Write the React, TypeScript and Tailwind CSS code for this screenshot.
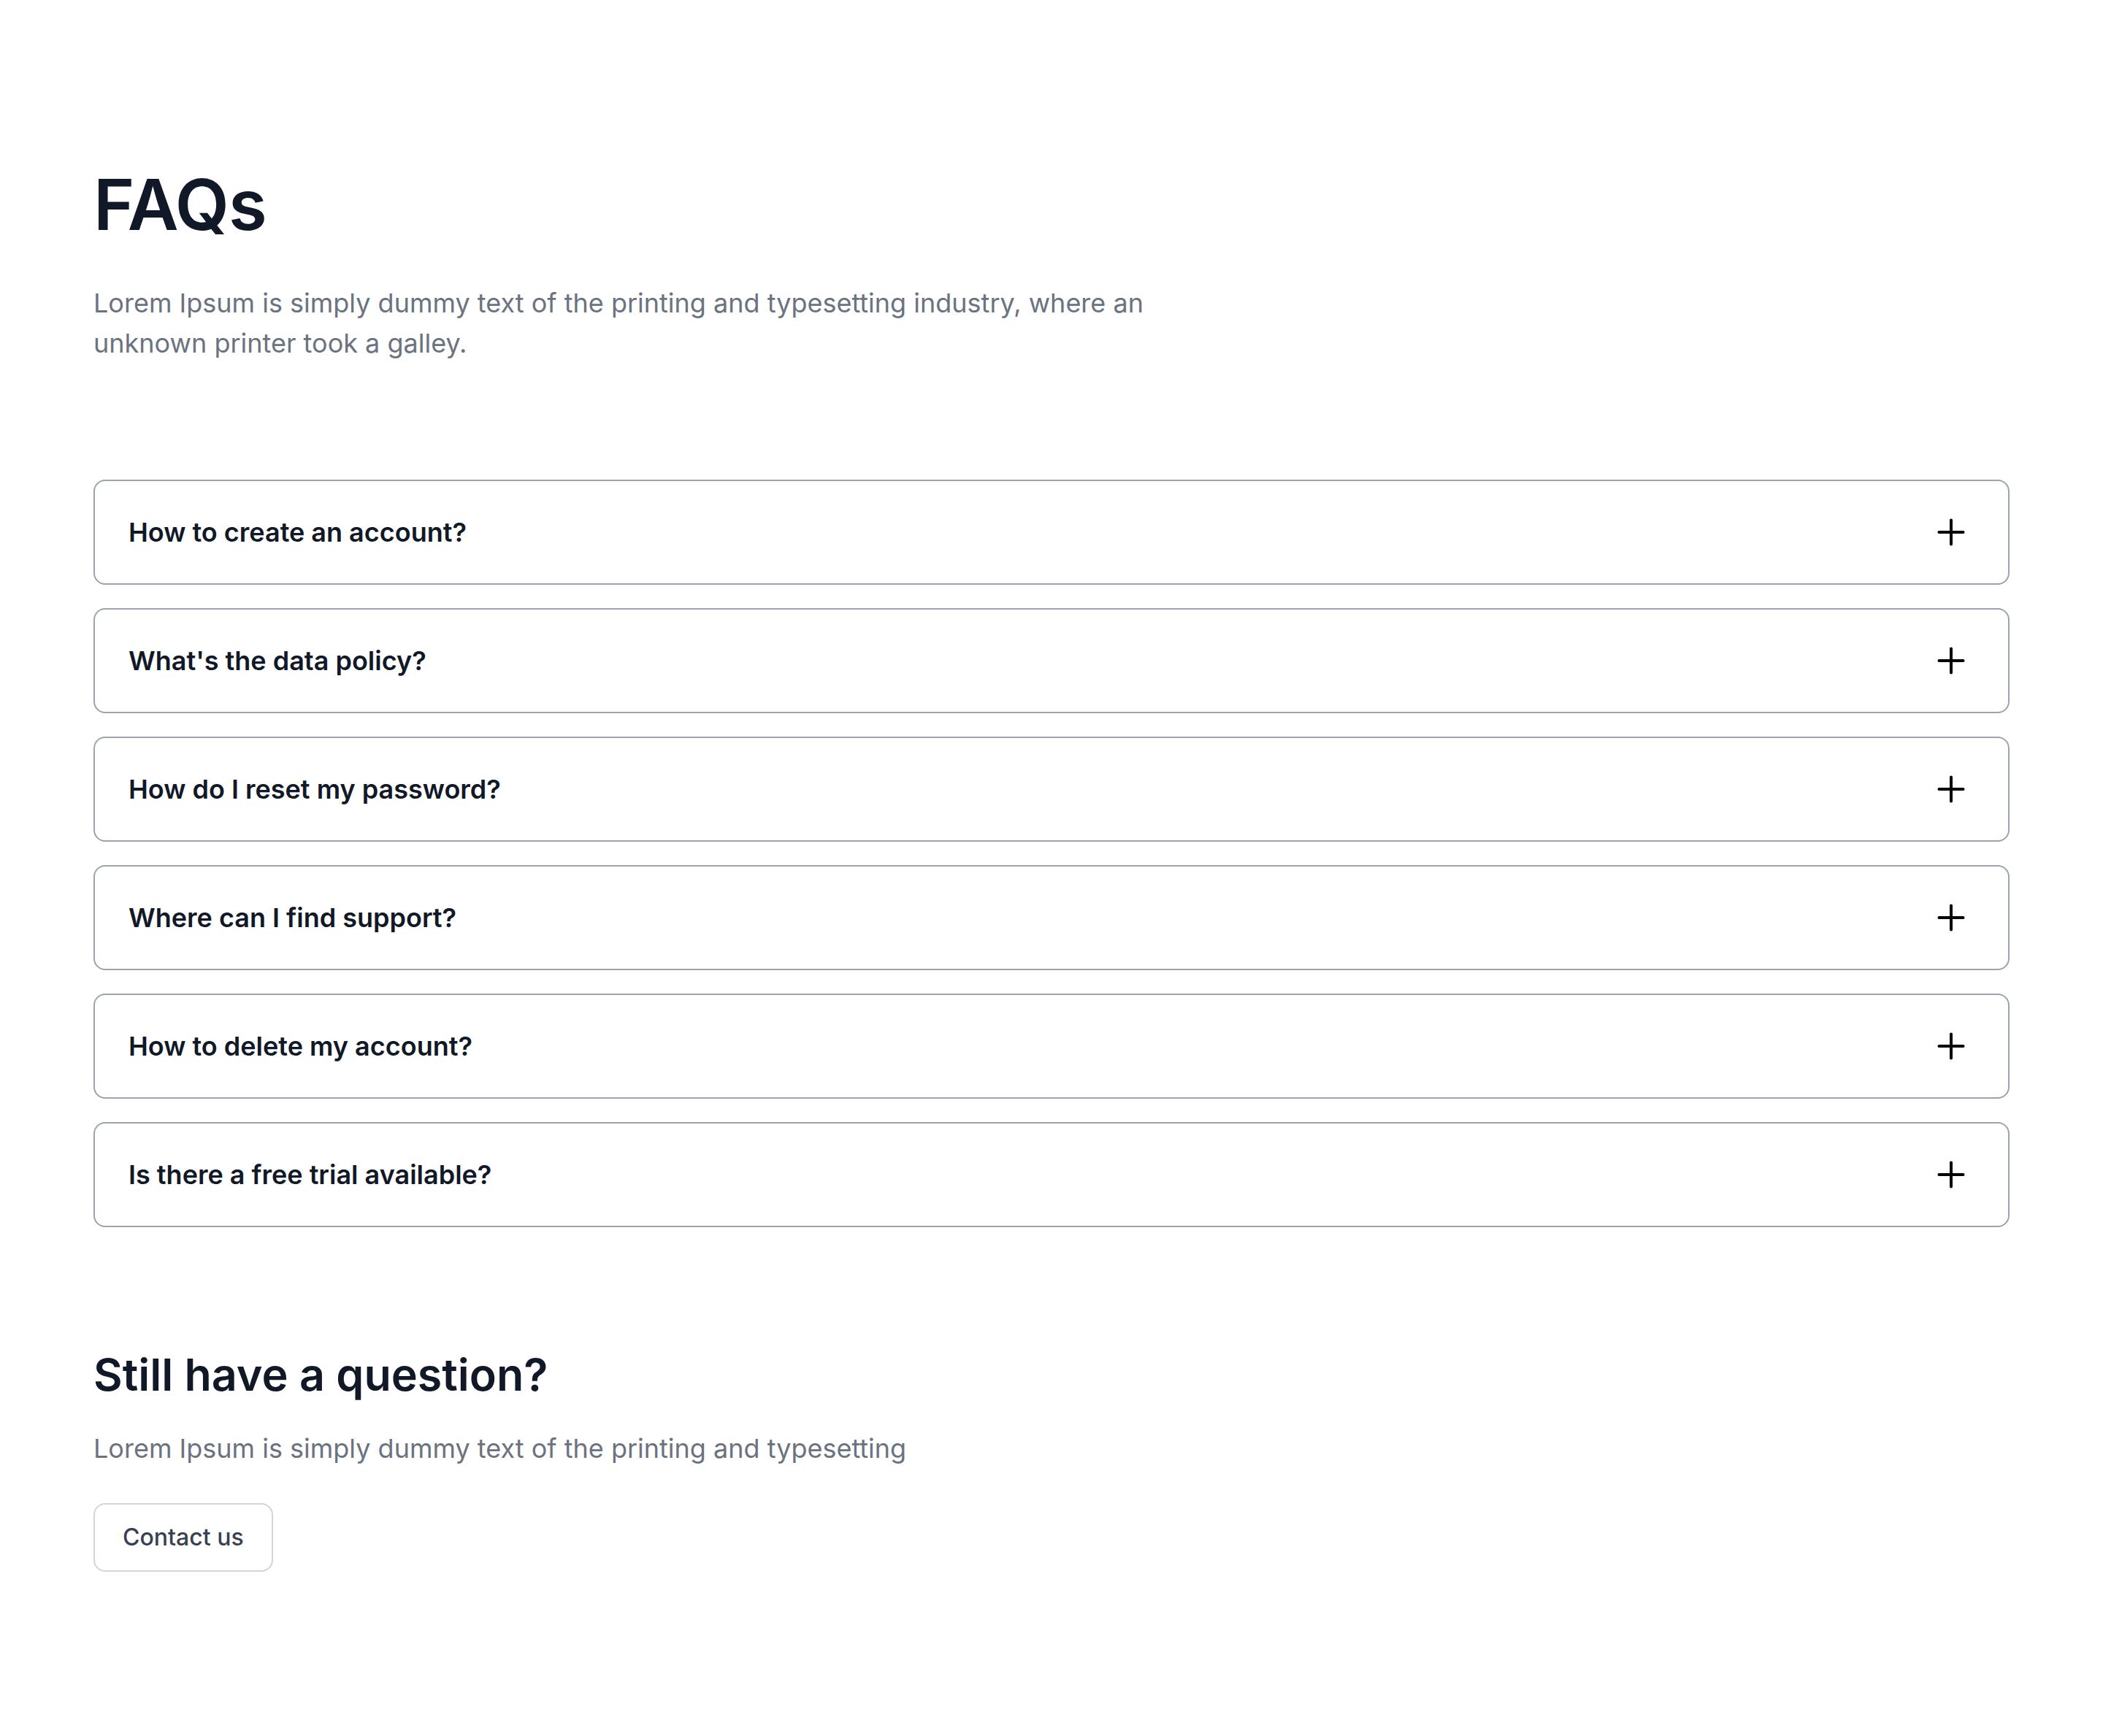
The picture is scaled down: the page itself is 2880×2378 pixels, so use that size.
import React from "react";

const questions = [
  "How to create an account?",
  "What's the data policy?",
  "How do I reset my password?",
  "Where can I find support?",
  "How to delete my account?",
  "Is there a free trial available?",
];

function PlusIcon() {
  return (
    <svg width="40" height="40" viewBox="0 0 40 40" fill="none" aria-hidden="true">
      <path d="M20 3.5V36.5M3.5 20H36.5" stroke="#000" strokeWidth="4" strokeLinecap="round" />
    </svg>
  );
}

export default function App() {
  return (
    <div
      className="min-h-screen bg-white px-[128px] pt-[232px] pb-[224px]"
      style={{ fontFamily: "Inter, 'Noto Sans', sans-serif" }}
    >
      <h1 className="text-[96px] leading-[96px] font-semibold tracking-[-0.01em] text-[#111827]">FAQs</h1>
      <p className="mt-[60px] max-w-[1536px] text-[36px] leading-[55px] text-[#6b7280]">
        Lorem Ipsum is simply dummy text of the printing and typesetting industry, where an unknown printer took a galley.
      </p>

      <div className="mt-[159px] flex flex-col gap-[32px]">
        {questions.map((q) => (
          <div
            key={q}
            className="flex h-[144px] items-center justify-between rounded-[16px] border-2 border-[#9ca3af] bg-white pl-[46px] pr-[58px]"
          >
            <span className="text-[36px] font-semibold text-[#111827]">{q}</span>
            <PlusIcon />
          </div>
        ))}
      </div>

      <div className="mt-[166px]">
        <h2 className="text-[61px] leading-[72px] font-semibold text-[#111827]">Still have a question?</h2>
        <p className="mt-[37px] text-[36px] leading-[56px] text-[#6b7280]">
          Lorem Ipsum is simply dummy text of the printing and typesetting
        </p>
        <button className="mt-[47px] flex h-[94px] items-center rounded-[16px] border-2 border-[#d1d5db] bg-white px-[38px] text-[32px] font-medium text-[#374151]">
          Contact us
        </button>
      </div>
    </div>
  );
}
